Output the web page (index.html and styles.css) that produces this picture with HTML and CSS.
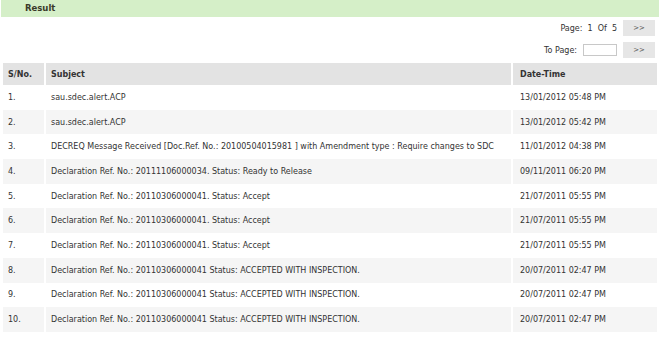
FILE: index.html
```html
<!DOCTYPE html>
<html>
<head>
<meta charset="utf-8">
<link rel="stylesheet" href="styles.css">
</head>
<body>
<div class="title-bar">Result</div>
<div class="pager">
  <div class="pager-row">
    <span class="pager-label">Page:&nbsp; 1&nbsp; Of&nbsp; 5</span>
    <button class="pager-btn">&gt;&gt;</button>
  </div>
  <div class="pager-row">
    <span class="pager-label">To Page:</span>
    <input class="pager-input" type="text">
    <button class="pager-btn">&gt;&gt;</button>
  </div>
</div>
<table class="results">
  <thead>
    <tr><th class="c-no">S/No.</th><th class="c-subj">Subject</th><th class="c-date">Date-Time</th></tr>
  </thead>
  <tbody>
    <tr><td>1.</td><td>sau.sdec.alert.ACP</td><td class="date">13/01/2012 05:48 PM</td></tr>
    <tr class="alt"><td>2.</td><td>sau.sdec.alert.ACP</td><td class="date">13/01/2012 05:42 PM</td></tr>
    <tr><td>3.</td><td>DECREQ Message Received [Doc.Ref. No.: 20100504015981 ] with Amendment type : Require changes to SDC</td><td class="date">11/01/2012 04:38 PM</td></tr>
    <tr class="alt"><td>4.</td><td>Declaration Ref. No.: 20111106000034. Status: Ready to Release</td><td class="date">09/11/2011 06:20 PM</td></tr>
    <tr><td>5.</td><td>Declaration Ref. No.: 20110306000041. Status: Accept</td><td class="date">21/07/2011 05:55 PM</td></tr>
    <tr class="alt"><td>6.</td><td>Declaration Ref. No.: 20110306000041. Status: Accept</td><td class="date">21/07/2011 05:55 PM</td></tr>
    <tr><td>7.</td><td>Declaration Ref. No.: 20110306000041. Status: Accept</td><td class="date">21/07/2011 05:55 PM</td></tr>
    <tr class="alt"><td>8.</td><td>Declaration Ref. No.: 20110306000041 Status: ACCEPTED WITH INSPECTION.</td><td class="date">20/07/2011 02:47 PM</td></tr>
    <tr><td>9.</td><td>Declaration Ref. No.: 20110306000041 Status: ACCEPTED WITH INSPECTION.</td><td class="date">20/07/2011 02:47 PM</td></tr>
    <tr class="alt"><td>10.</td><td>Declaration Ref. No.: 20110306000041 Status: ACCEPTED WITH INSPECTION.</td><td class="date">20/07/2011 02:47 PM</td></tr>
  </tbody>
</table>
</body>
</html>
```
FILE: styles.css
```css
html, body {
  margin: 0;
  padding: 0;
  background: #ffffff;
}
body {
  font-family: "DejaVu Sans", Verdana, sans-serif;
  font-size: 8px;
  color: #333333;
}
.title-bar {
  margin-left: 1px;
  height: 17px;
  line-height: 17px;
  background: #d5efc8;
  padding-left: 24px;
  font-weight: bold;
  color: #3a3a2a;
  font-size: 8.5px;
}
.pager {
  display: flex;
  flex-direction: column;
  align-items: flex-end;
  padding: 3px 4px 0 0;
  gap: 6px;
}
.pager-row {
  display: flex;
  align-items: center;
  height: 16px;
}
.pager-label {
  color: #333;
  margin-right: 6px;
}
.pager-input {
  width: 34px;
  height: 12px;
  padding: 0;
  margin: 0 6px 0 0;
  border: 1px solid #c8c8c8;
  background: #fff;
  box-sizing: border-box;
}
.pager-btn {
  width: 32px;
  height: 16px;
  margin: 0;
  padding: 0;
  border: none;
  background: #e6e6e6;
  color: #555;
  font-family: "DejaVu Sans", Verdana, sans-serif;
  font-size: 7px;
}
.results {
  margin-top: 5px;
  width: 100%;
  border-collapse: separate;
  border-spacing: 2px 0;
  padding-left: 1px;
}
.results th {
  background: #e3e3e3;
  height: 22px;
  text-align: left;
  font-weight: bold;
  padding: 0 0 0 5px;
  color: #333;
}
.results td {
  height: 24.7px;
  padding: 0 0 0 5px;
  color: #333;
}
.results .c-date,
.results .date {
  padding-left: 7px;
}
.results .alt td {
  background: #f5f5f5;
}
.c-no { width: 36px; }
.c-date { width: 137px; }
```
